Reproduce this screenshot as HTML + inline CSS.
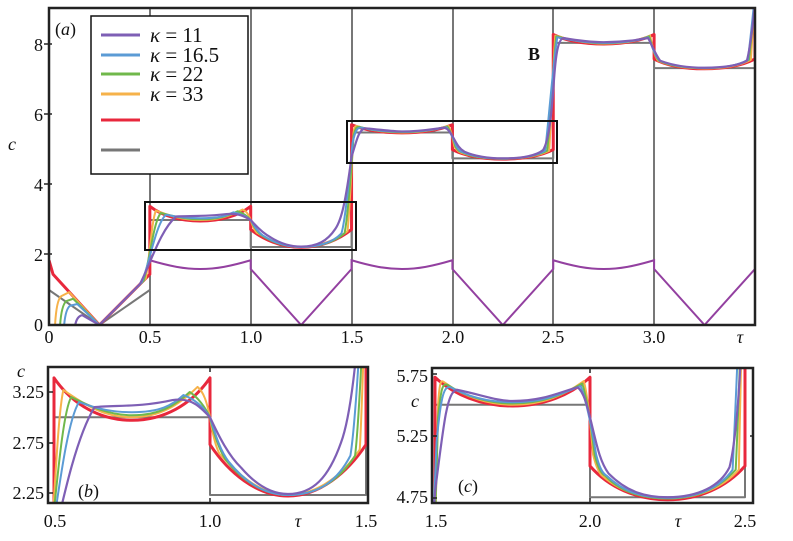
<!DOCTYPE html>
<html><head><meta charset="utf-8"><style>
html,body{margin:0;padding:0;background:#fff;width:793px;height:541px;overflow:hidden;}
svg{display:block;font-family:"Liberation Serif",serif;}
</style></head><body>
<svg width="793" height="541" viewBox="0 0 793 541" xmlns="http://www.w3.org/2000/svg" xmlns:xlink="http://www.w3.org/1999/xlink">
<defs>
<clipPath id="ca"><rect x="49" y="8" width="706" height="317"/></clipPath>
<clipPath id="cb"><rect x="48" y="367" width="320" height="136"/></clipPath>
<clipPath id="cc"><rect x="432" y="368" width="321" height="135"/></clipPath>
<g id="cv" fill="none" stroke-linejoin="round">
<path vector-effect="non-scaling-stroke" stroke="#777" stroke-width="2" d="M0 1 L0.25 0 L0.5 1 M0.5 3 H1 V2.23 H1.5 V5.5 H2 V4.76 H2.5 V8.06 H3 V7.34 H3.5 V10"/>
<path vector-effect="non-scaling-stroke" stroke="#e8283c" stroke-width="3" d="M0 1.85 L0.02 1.45 L0.25 0 L0.5 1.45 L0.5 3.39 C0.56 3.12 0.65 2.97 0.75 2.97 C0.85 2.97 0.94 3.12 1 3.39 L1 2.73 C1.06 2.45 1.15 2.22 1.25 2.22 C1.35 2.22 1.44 2.45 1.5 2.73 L1.5 5.72 C1.56 5.58 1.65 5.49 1.75 5.49 C1.85 5.49 1.94 5.58 2 5.72 L2 5.01 C2.06 4.84 2.15 4.74 2.25 4.74 C2.35 4.74 2.44 4.84 2.5 5.01 L2.5 8.3 C2.56 8.13 2.65 8.03 2.75 8.03 C2.85 8.03 2.94 8.13 3 8.3 L3 7.6 C3.06 7.42 3.15 7.32 3.25 7.32 C3.35 7.32 3.44 7.42 3.5 7.6 L3.5 10"/>
<path vector-effect="non-scaling-stroke" stroke="#f6b24a" stroke-width="2" d="M0.03 0 C0.035 0.5 0.045 0.75 0.06 0.82 L0.1 0.94 L0.25 0 L0.48 1.33 C0.5 2.0 0.51 3.0 0.53 3.27 C0.6 3.12 0.66 3.0 0.75 3.0 C0.84 3.0 0.9 3.12 0.96 3.3 C0.98 3.25 0.99 3.15 1 3.0 C1.01 2.8 1.02 2.7 1.03 2.64 C1.1 2.4 1.17 2.23 1.25 2.23 C1.35 2.23 1.43 2.45 1.48 2.68 C1.49 3.2 1.5 4.5 1.51 5.5 C1.515 5.7 1.52 5.7 1.53 5.68 C1.6 5.55 1.68 5.5 1.75 5.5 C1.85 5.5 1.92 5.58 1.98 5.69 C1.99 5.6 2 5.4 2.01 5.1 C2.02 5.0 2.03 4.95 2.04 4.93 C2.1 4.8 2.17 4.75 2.25 4.75 C2.35 4.75 2.43 4.84 2.48 4.98 C2.49 6 2.5 7.5 2.51 8.27 C2.6 8.12 2.67 8.04 2.75 8.04 C2.85 8.04 2.93 8.12 2.98 8.27 C2.99 8.0 3 7.7 3.02 7.55 C3.08 7.4 3.16 7.33 3.25 7.33 C3.35 7.33 3.43 7.42 3.48 7.58 C3.49 8.5 3.5 9.5 3.51 10"/>
<path vector-effect="non-scaling-stroke" stroke="#70b84b" stroke-width="2" d="M0.055 0 C0.06 0.4 0.07 0.6 0.085 0.68 L0.12 0.75 L0.25 0 L0.47 1.27 C0.5 1.9 0.52 3.0 0.555 3.2 C0.62 3.1 0.68 3.02 0.75 3.02 C0.84 3.02 0.89 3.12 0.935 3.25 C0.96 3.2 0.985 3.1 1 3.0 C1.015 2.8 1.03 2.68 1.05 2.58 C1.1 2.38 1.17 2.23 1.25 2.23 C1.35 2.23 1.42 2.4 1.465 2.62 C1.48 3.0 1.5 4.5 1.51 5.4 C1.52 5.65 1.525 5.67 1.54 5.66 C1.6 5.56 1.68 5.51 1.75 5.51 C1.85 5.51 1.91 5.58 1.975 5.67 C1.99 5.55 2 5.4 2.015 5.1 C2.025 5.0 2.035 4.95 2.05 4.93 C2.1 4.8 2.17 4.75 2.25 4.75 C2.35 4.75 2.42 4.84 2.47 4.98 C2.49 6 2.5 7.5 2.515 8.25 C2.6 8.12 2.67 8.05 2.75 8.05 C2.85 8.05 2.92 8.12 2.975 8.25 C2.99 8.0 3 7.7 3.025 7.55 C3.08 7.4 3.16 7.34 3.25 7.34 C3.35 7.34 3.42 7.42 3.47 7.58 C3.49 8.5 3.5 9.5 3.51 10"/>
<path vector-effect="non-scaling-stroke" stroke="#5b9bd5" stroke-width="2" d="M0.075 0 C0.08 0.3 0.09 0.5 0.105 0.55 L0.14 0.6 L0.25 0 L0.46 1.22 C0.5 1.8 0.53 2.9 0.58 3.15 C0.64 3.08 0.69 3.05 0.75 3.05 C0.84 3.05 0.88 3.12 0.915 3.22 C0.95 3.18 0.98 3.1 1 3.0 C1.02 2.8 1.035 2.66 1.06 2.56 C1.11 2.37 1.17 2.23 1.25 2.23 C1.35 2.23 1.41 2.38 1.45 2.62 C1.47 3.0 1.49 4.3 1.505 5.2 C1.52 5.6 1.53 5.65 1.55 5.64 C1.61 5.56 1.68 5.52 1.75 5.52 C1.85 5.52 1.9 5.58 1.97 5.65 C1.985 5.55 2 5.4 2.02 5.1 C2.03 5.0 2.04 4.95 2.055 4.93 C2.11 4.8 2.17 4.755 2.25 4.755 C2.35 4.755 2.42 4.84 2.46 4.98 C2.48 6 2.5 7.5 2.52 8.22 C2.6 8.12 2.67 8.06 2.75 8.06 C2.85 8.06 2.92 8.12 2.97 8.22 C2.99 8.0 3 7.7 3.03 7.55 C3.09 7.4 3.16 7.345 3.25 7.345 C3.35 7.345 3.42 7.42 3.465 7.58 C3.485 8.5 3.5 9.5 3.51 10"/>
<path vector-effect="non-scaling-stroke" stroke="#7e5fb5" stroke-width="2.2" d="M0.13 0 C0.135 0.15 0.145 0.26 0.165 0.28 L0.25 0 L0.45 1.16 C0.5 1.7 0.55 2.7 0.63 3.1 C0.7 3.12 0.78 3.1 0.88 3.17 C0.94 3.2 0.97 3.1 1 3.0 C1.03 2.8 1.06 2.62 1.1 2.5 C1.15 2.32 1.2 2.24 1.25 2.24 C1.33 2.24 1.38 2.4 1.42 2.75 C1.45 3.0 1.47 3.5 1.5 4.8 C1.53 5.4 1.54 5.6 1.57 5.62 C1.65 5.58 1.7 5.53 1.75 5.53 C1.85 5.53 1.9 5.6 1.96 5.64 C1.98 5.6 1.99 5.5 2 5.4 C2.02 5.2 2.03 5.05 2.06 4.95 C2.12 4.8 2.18 4.76 2.25 4.76 C2.35 4.76 2.42 4.85 2.45 5.0 C2.48 5.3 2.49 6 2.5 6.7 C2.51 7.6 2.52 8.15 2.55 8.2 C2.65 8.1 2.7 8.08 2.75 8.08 C2.85 8.08 2.92 8.15 2.97 8.2 C2.99 8.0 3 7.8 3.03 7.55 C3.1 7.4 3.18 7.35 3.25 7.35 C3.35 7.35 3.42 7.42 3.46 7.55 C3.48 8 3.5 9 3.51 10"/>
</g>
</defs>

<g stroke="#555" stroke-width="1.6">
<line x1="150" y1="8" x2="150" y2="325"/><line x1="251" y1="8" x2="251" y2="325"/><line x1="352" y1="8" x2="352" y2="325"/><line x1="453" y1="8" x2="453" y2="325"/><line x1="553" y1="8" x2="553" y2="325"/><line x1="654" y1="8" x2="654" y2="325"/>
</g>
<g clip-path="url(#ca)">
<g transform="matrix(201.7 0 0 -35 49 325)">
<path vector-effect="non-scaling-stroke" fill="none" stroke="#9340a0" stroke-width="2" d="M0.5 1.85 C0.6 1.68 0.67 1.6 0.75 1.6 C0.83 1.6 0.9 1.68 1 1.85 L1 1.6 L1.25 0 L1.5 1.6 L1.5 1.85 C1.6 1.68 1.67 1.6 1.75 1.6 C1.83 1.6 1.9 1.68 2 1.85 L2 1.6 L2.25 0 L2.5 1.6 L2.5 1.85 C2.6 1.68 2.67 1.6 2.75 1.6 C2.83 1.6 2.9 1.68 3 1.85 L3 1.6 L3.25 0 L3.5 1.6 L3.5 1.85"/>
<use xlink:href="#cv" href="#cv"/>
</g>
</g>
<rect x="49" y="8" width="706" height="317" fill="none" stroke="#222" stroke-width="2.5"/>
<rect x="145" y="202" width="211" height="48" fill="none" stroke="#111" stroke-width="2"/>
<rect x="347" y="121" width="210" height="42" fill="none" stroke="#111" stroke-width="2"/>
<rect x="91" y="16" width="157" height="158" fill="#fff" stroke="#111" stroke-width="1.5"/>
<g stroke-width="3">
<line x1="101" y1="35" x2="140" y2="35" stroke="#7e5fb5"/>
<line x1="101" y1="55" x2="140" y2="55" stroke="#5b9bd5"/>
<line x1="101" y1="74" x2="140" y2="74" stroke="#70b84b"/>
<line x1="101" y1="94" x2="140" y2="94" stroke="#f6b24a"/>
<line x1="101" y1="120" x2="140" y2="120" stroke="#e8283c"/>
<line x1="101" y1="150" x2="140" y2="150" stroke="#777"/>
</g>
<g font-size="21" fill="#111">
<text x="150" y="42"><tspan font-style="italic">κ</tspan> = 11</text>
<text x="150" y="62"><tspan font-style="italic">κ</tspan> = 16.5</text>
<text x="150" y="81"><tspan font-style="italic">κ</tspan> = 22</text>
<text x="150" y="101"><tspan font-style="italic">κ</tspan> = 33</text>
</g>
<g font-size="18" fill="#111">
<text x="55" y="35">(<tspan font-style="italic">a</tspan>)</text>
<text x="528" y="60" font-weight="bold">B</text>
<text x="8" y="150" font-style="italic">c</text>
<g text-anchor="end">
<text x="43" y="331">0</text><text x="43" y="261">2</text><text x="43" y="191">4</text><text x="43" y="121">6</text><text x="43" y="51">8</text>
</g>
<g text-anchor="middle">
<text x="49" y="343">0</text><text x="150" y="343">0.5</text><text x="251" y="343">1.0</text><text x="352" y="343">1.5</text><text x="453" y="343">2.0</text><text x="553" y="343">2.5</text><text x="654" y="343">3.0</text><text x="740" y="343" font-style="italic">τ</text>
</g>
</g>

<g clip-path="url(#cb)">
<g transform="matrix(312 0 0 -101 -102 720.25)"><use xlink:href="#cv" href="#cv"/></g>
</g>
<rect x="48" y="367" width="320" height="136" fill="none" stroke="#222" stroke-width="2.5"/>
<g clip-path="url(#cc)">
<g transform="matrix(310 0 0 -125 -30 1092.25)"><use xlink:href="#cv" href="#cv"/></g>
</g>
<rect x="432" y="368" width="321" height="135" fill="none" stroke="#222" stroke-width="2.5"/>

<g font-size="18" fill="#111">
<text x="17" y="377" font-style="italic">c</text>
<g text-anchor="end"><text x="44" y="398">3.25</text><text x="44" y="449">2.75</text><text x="44" y="499">2.25</text>
<text x="428" y="382">5.75</text><text x="428" y="442">5.25</text><text x="428" y="503">4.75</text></g>
<text x="411" y="407" font-style="italic">c</text>
<g text-anchor="middle">
<text x="55" y="527">0.5</text><text x="210" y="527">1.0</text><text x="298" y="527" font-style="italic">τ</text><text x="366" y="527">1.5</text>
<text x="436" y="527">1.5</text><text x="590" y="527">2.0</text><text x="678" y="527" font-style="italic">τ</text><text x="745" y="527">2.5</text>
</g>
<text x="78" y="497">(<tspan font-style="italic">b</tspan>)</text>
<text x="458" y="492">(<tspan font-style="italic">c</tspan>)</text>
</g>
<g stroke="#222" stroke-width="1.5">
<line x1="48" y1="392" x2="53" y2="392"/><line x1="48" y1="443" x2="53" y2="443"/><line x1="48" y1="493" x2="53" y2="493"/>
<line x1="432" y1="374" x2="437" y2="374"/><line x1="432" y1="436" x2="437" y2="436"/><line x1="432" y1="498" x2="437" y2="498"/>
<line x1="750" y1="436" x2="753" y2="436"/>
<line x1="210" y1="367" x2="210" y2="372"/><line x1="210" y1="498" x2="210" y2="503"/>
<line x1="590" y1="368" x2="590" y2="373"/><line x1="590" y1="498" x2="590" y2="503"/>
<line x1="44" y1="44" x2="52" y2="44"/><line x1="44" y1="114" x2="52" y2="114"/><line x1="44" y1="184" x2="52" y2="184"/><line x1="44" y1="254" x2="52" y2="254"/>
</g>
</svg>
</body></html>
